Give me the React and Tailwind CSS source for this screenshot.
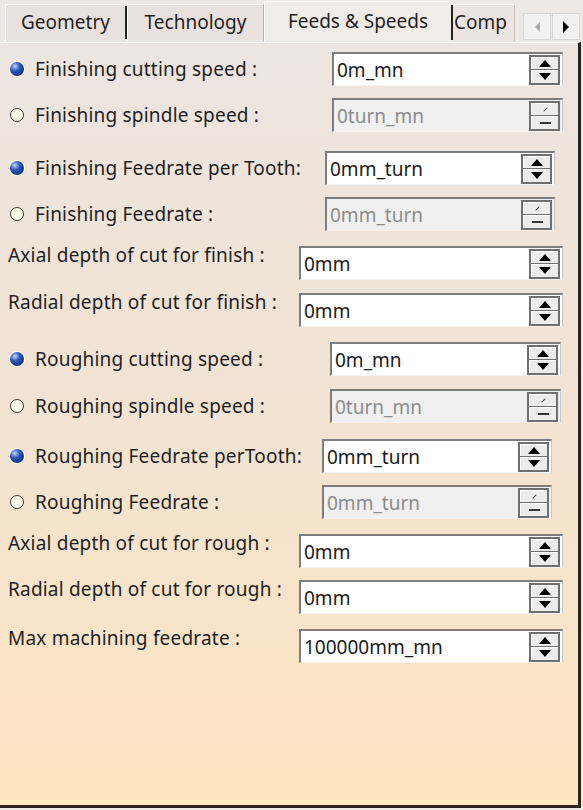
import React from "react";

const rows = [
  { label: "Finishing cutting speed :", value: "0m_mn", radio: "on", mt: "mt-[9px]", lw: "w-[332px]", iw: "w-[231px]" },
  { label: "Finishing spindle speed :", value: "0turn_mn", radio: "off", mt: "mt-[12px]", lw: "w-[332px]", iw: "w-[231px]" },
  { label: "Finishing Feedrate per Tooth:", value: "0mm_turn", radio: "on", mt: "mt-[19px]", lw: "w-[325px]", iw: "w-[230px]" },
  { label: "Finishing Feedrate :", value: "0mm_turn", radio: "off", mt: "mt-[12px]", lw: "w-[325px]", iw: "w-[230px]" },
  { label: "Axial depth of cut for finish :", value: "0mm", mt: "mt-[15px]", lw: "w-[299px]", iw: "w-[264px]" },
  { label: "Radial depth of cut for finish :", value: "0mm", mt: "mt-[13px]", lw: "w-[299px]", iw: "w-[264px]" },
  { label: "Roughing cutting speed :", value: "0m_mn", radio: "on", mt: "mt-[15px]", lw: "w-[330px]", iw: "w-[231px]" },
  { label: "Roughing spindle speed :", value: "0turn_mn", radio: "off", mt: "mt-[13px]", lw: "w-[330px]", iw: "w-[231px]" },
  { label: "Roughing Feedrate perTooth:", value: "0mm_turn", radio: "on", mt: "mt-[16px]", lw: "w-[322px]", iw: "w-[230px]" },
  { label: "Roughing Feedrate :", value: "0mm_turn", radio: "off", mt: "mt-[12px]", lw: "w-[322px]", iw: "w-[230px]" },
  { label: "Axial depth of cut for rough :", value: "0mm", mt: "mt-[15px]", lw: "w-[299px]", iw: "w-[264px]" },
  { label: "Radial depth of cut for rough :", value: "0mm", mt: "mt-[12px]", lw: "w-[299px]", iw: "w-[264px]" },
  { label: "Max machining feedrate :", value: "100000mm_mn", mt: "mt-[15px]", lw: "w-[299px]", iw: "w-[264px]" },
];

/* -------------------- Radio -------------------- */
function Radio({ on }) {
  if (on) {
    return (
      <span className="w-[14px] h-[14px] rounded-full shrink-0 bg-[radial-gradient(circle_at_35%_30%,#c4d8f8_0%,#2a5cc0_35%,#0b2466_85%)] shadow-[0_0_0_1px_#fff]" />
    );
  }
  return (
    <span className="w-[14px] h-[14px] rounded-full shrink-0 bg-[#fdfbe8] border border-[#3a3a3a]" />
  );
}

/* -------------------- Spinner -------------------- */
function Spinner({ disabled }) {
  return (
    <div className="w-[31px] h-[30px] shrink-0 flex flex-col gap-[1px] bg-[#6f6f6f] p-[2px] mr-[2px]">
      <div className="flex-1 bg-[#ececec] border-t border-l border-white flex items-center justify-center">
        {disabled ? (
          <span className="block w-[5px] h-[1px] bg-[#333] -rotate-45" />
        ) : (
          <span className="w-0 h-0 border-l-[6px] border-r-[6px] border-b-[7px] border-l-transparent border-r-transparent border-b-black" />
        )}
      </div>
      <div className="flex-1 bg-[#ececec] border-t border-l border-white flex items-center justify-center">
        {disabled ? (
          <span className="block w-[11px] h-[2px] bg-[#333]" />
        ) : (
          <span className="w-0 h-0 border-l-[6px] border-r-[6px] border-t-[7px] border-l-transparent border-r-transparent border-t-black" />
        )}
      </div>
    </div>
  );
}

/* -------------------- Field -------------------- */
function Field({ value, disabled, width }) {
  return (
    <div
      className={`${width} h-[34px] flex items-center border-t-2 border-l-2 border-[#7d7d7d] border-r border-b border-r-[#c8c8c8] border-b-[#f4f4f4] ${
        disabled ? "bg-[#f0f0f0] text-[#8c8c8c]" : "bg-white text-[#1a1a1a]"
      }`}
    >
      <span className="flex-1 min-w-0 pl-[3px] leading-[24px] whitespace-nowrap">{value}</span>
      <Spinner disabled={disabled} />
    </div>
  );
}

/* -------------------- Tabs -------------------- */
function Tabs() {
  return (
    <div className="h-[42px] flex items-end bg-[#efe9e6] pl-[5px] shrink-0">
      <div className="w-[120px] h-[37px] mb-[1px] flex items-center justify-center pb-[3px] bg-[#e9e1dd] border-t border-l border-white">
        Geometry
      </div>
      <div className="w-[2px] h-[33px] bg-[#222] self-end mb-[3px]" />
      <div className="w-[137px] h-[37px] mb-[1px] flex items-center justify-center pb-[3px] bg-[#e9e1dd] border-t border-l border-white border-r border-r-[#b8b0ab]">
        Technology
      </div>
      <div className="w-[187px] h-[41px] flex items-center justify-center pb-[3px] bg-[#f2ece9] border-t border-l border-white">
        Feeds &amp; Speeds
      </div>
      <div className="w-[2px] h-[35px] bg-[#222] self-end mb-[2px]" />
      <div className="w-[62px] h-[37px] mb-[1px] flex items-center pl-[1px] pb-[3px] bg-[#ebe4e0] border-t border-white border-r border-r-[#c9c0bb] overflow-hidden">
        Comp
      </div>
      <div className="flex-1" />
      <div className="flex self-start mt-[13px] mr-[3px] gap-[1px]">
        <div className="w-[28px] h-[27px] bg-[#f1f1f1] border border-[#d6d6d6] flex items-center justify-center">
          <span className="w-0 h-0 border-t-[5px] border-b-[5px] border-r-[5px] border-t-transparent border-b-transparent border-r-[#a8a8a8]" />
        </div>
        <div className="w-[28px] h-[27px] bg-[#f1f1f1] border border-[#d6d6d6] flex items-center justify-center">
          <span className="w-0 h-0 border-t-[6px] border-b-[6px] border-l-[6px] border-t-transparent border-b-transparent border-l-black" />
        </div>
      </div>
    </div>
  );
}

export default function App() {
  return (
    <div className="w-[583px] h-[810px] flex flex-col bg-[#efe9e6] text-[19px] text-[#1e1e1e] font-['Noto_Sans',_'Open_Sans',sans-serif] leading-[24px]">
      <Tabs />
      <div className="flex-1 flex flex-col border-t border-white border-r-[3px] border-r-[#2a2420] border-b-[3px] border-b-[#2a2420] mr-[2px] mb-[2px] bg-linear-to-b from-[#ede5e1] via-[#f2e3d2] to-[#fde5c0]">
        {rows.map((r) => (
          <div key={r.label} className={`${r.mt} flex h-[34px]`}>
            <div
              className={`${r.lw} shrink-0 flex ${
                r.radio ? "items-center gap-[11px] pl-[10px]" : "items-start pl-[8px] -mt-[3px]"
              }`}
            >
              {r.radio && <Radio on={r.radio === "on"} />}
              <span className="whitespace-nowrap tracking-[0.2px]">{r.label}</span>
            </div>
            <Field value={r.value} disabled={r.radio === "off"} width={r.iw} />
          </div>
        ))}
      </div>
    </div>
  );
}
